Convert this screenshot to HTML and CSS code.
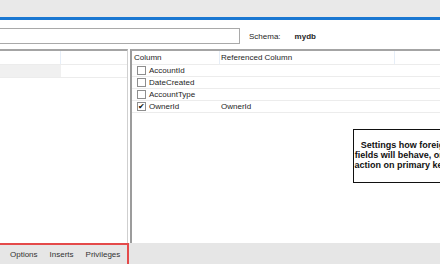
FILE: index.html
```html
<!DOCTYPE html>
<html lang="en">
<head>
    <meta charset="UTF-8">
    <title>Foreign Keys</title>
    <link rel="stylesheet" href="styles.css">
</head>
<body>
    <div class="titlebar"></div>
    <div class="accent"></div>

    <div class="toolbar">
        <div class="name-input"></div>
        <span class="label">Schema:</span>
        <span class="value">mydb</span>
    </div>

    <div class="panes">
        <div class="pane fk-list">
            <div class="grid-head">
                <div class="cell name"></div>
                <div class="cell target"></div>
            </div>
            <div class="grid-row">
                <div class="cell name selected"></div>
                <div class="cell target"></div>
            </div>
        </div>

        <div class="pane fk-columns">
            <div class="grid-head">
                <div class="cell col">Column</div>
                <div class="cell ref">Referenced Column</div>
                <div class="cell rest"></div>
            </div>
            <div class="grid-row">
                <div class="cell col"><span class="check"></span>AccountId</div>
                <div class="cell ref"></div>
            </div>
            <div class="grid-row">
                <div class="cell col"><span class="check"></span>DateCreated</div>
                <div class="cell ref"></div>
            </div>
            <div class="grid-row">
                <div class="cell col"><span class="check"></span>AccountType</div>
                <div class="cell ref"></div>
            </div>
            <div class="grid-row">
                <div class="cell col"><span class="check checked">&#10004;</span>OwnerId</div>
                <div class="cell ref">OwnerId</div>
            </div>
        </div>
    </div>

    <div class="tabbar">
        <div class="tabs">
            <span class="tab">Options</span>
            <span class="tab">Inserts</span>
            <span class="tab">Privileges</span>
        </div>
    </div>

    <div class="callout">
        Settings how foreign key<br>
        fields will behave, on delete<br>
        action on primary key rows.
    </div>
</body>
</html>
```

FILE: styles.css
```css
body {
    margin: 0;
    width: 440px;
    height: 264px;
    overflow: hidden;
    background: #ffffff;
    font-family: "Liberation Sans", Arial, sans-serif;
    font-size: 8px;
    color: #1e1e1e;
    position: relative;
}

.titlebar {
    height: 17px;
    background: #e9e9e9;
}
.accent {
    height: 3px;
    background: #1a78d2;
}

.toolbar {
    display: flex;
    align-items: center;
    height: 16px;
    margin-top: 8px;
}
.name-input {
    width: 239px;
    height: 14px;
    border: 1px solid #a9a9a9;
    border-left: none;
    background: #fff;
}
.label {
    margin-left: 9px;
}
.value {
    margin-left: 14px;
    font-weight: bold;
}

.panes {
    display: flex;
    height: 194px;
    margin-top: 5px;
}
.pane {
    border-top: 2px solid #a4a4a4;
    background: #fff;
}
.fk-list {
    width: 127px;
    border-right: 1px solid #cfcfcf;
}
.fk-columns {
    flex: 1;
    margin-left: 2px;
    border-left: 2px solid #9c9c9c;
}

.grid-head,
.grid-row {
    display: flex;
    border-bottom: 1px solid #ececec;
}
.grid-head {
    height: 13px;
    line-height: 13px;
}
.grid-row {
    height: 11px;
    line-height: 11px;
}
.cell {
    box-sizing: border-box;
    white-space: nowrap;
}

.fk-list .name {
    width: 61px;
    border-right: 1px solid #e6eef8;
}
.fk-list .grid-row .name {
    border-right: none;
}
.fk-list .target {
    flex: 1;
}
.fk-list .grid-row {
    height: 12px;
}
.selected {
    background: #f0f0f0;
}

.fk-columns .col {
    width: 88px;
    padding-left: 2px;
    border-right: 1px solid #e6eef8;
    display: flex;
    align-items: center;
}
.fk-columns .grid-row .col {
    border-right: none;
    padding-left: 5px;
}
.fk-columns .ref {
    width: 175px;
    padding-left: 1px;
    border-right: 1px solid #e6eef8;
}
.fk-columns .grid-row .ref {
    border-right: none;
}
.fk-columns .rest {
    flex: 1;
}

.check {
    box-sizing: border-box;
    width: 9px;
    height: 9px;
    margin-right: 3px;
    border: 1px solid #8e8e8e;
    background: #fff;
    font-size: 8px;
    line-height: 7px;
    text-align: center;
    color: #111;
}

.tabbar {
    height: 21px;
    background: #e6e6e6;
}
.tabs {
    box-sizing: border-box;
    width: 129px;
    height: 21px;
    padding-left: 4px;
    display: flex;
    align-items: center;
    border: 2px solid #e44a4a;
    border-left: none;
    border-bottom: none;
    color: #333;
}
.tab {
    padding: 0 6px;
}

.callout {
    position: absolute;
    left: 353px;
    top: 129px;
    width: 120px;
    height: 42px;
    padding-top: 10px;
    border: 1.5px solid #111;
    background: #fff;
    font-size: 9px;
    font-weight: bold;
    line-height: 10px;
    text-align: center;
    white-space: nowrap;
    color: #111;
}
```
